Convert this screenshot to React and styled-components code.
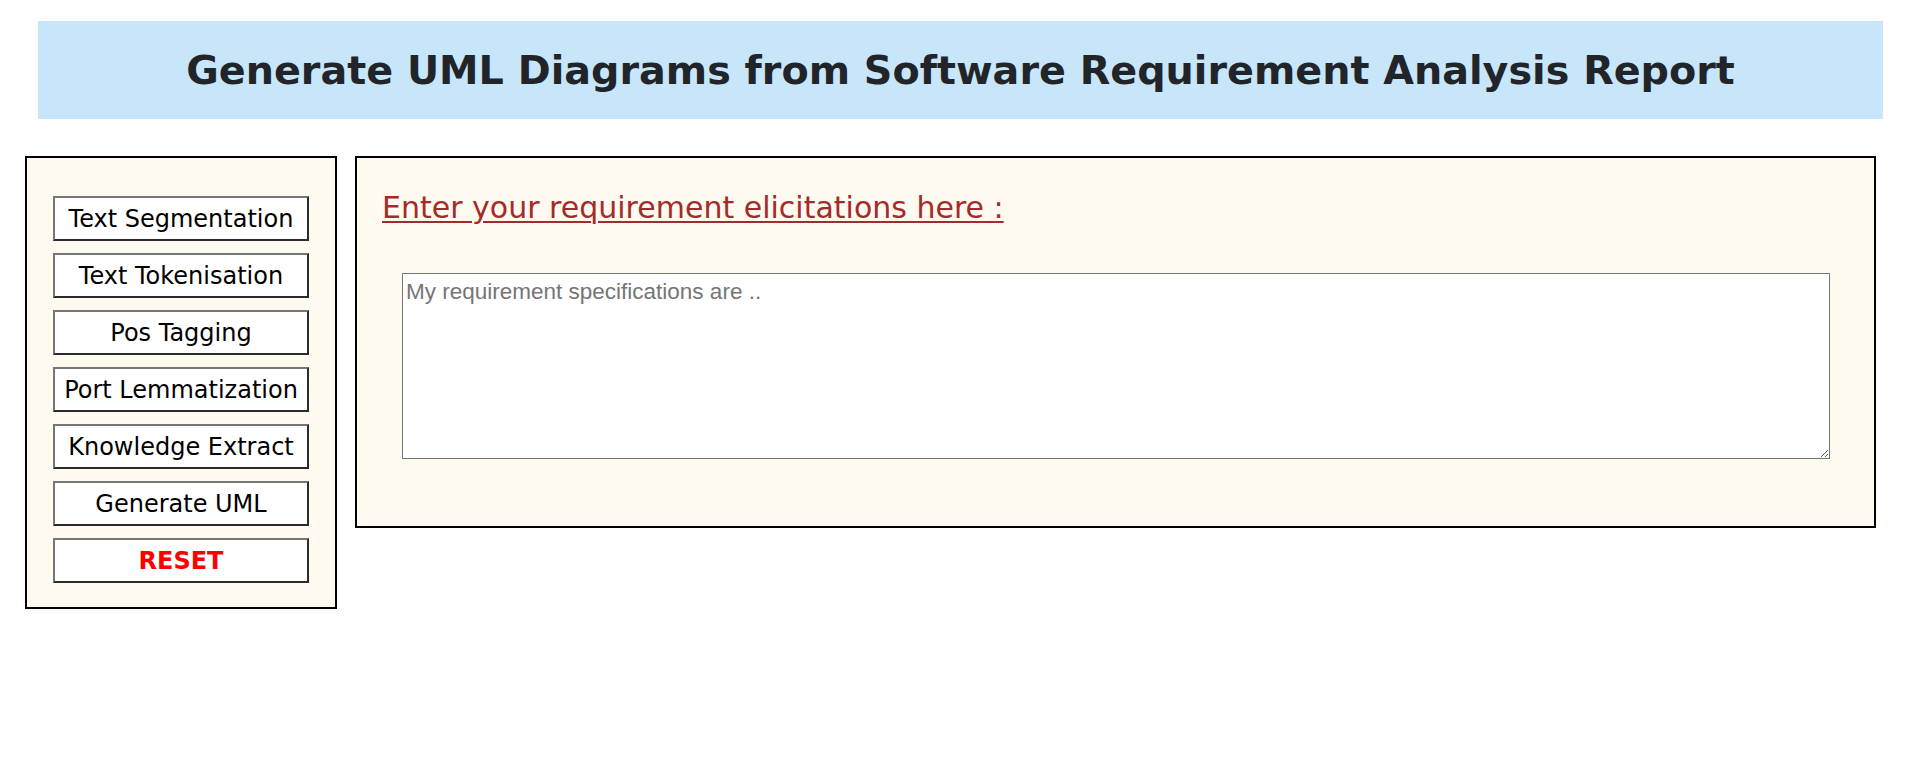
import React from "react"
import styled, { createGlobalStyle } from "styled-components"

const GlobalStyle = createGlobalStyle`
  html, body {
    margin: 0;
    padding: 0;
    background: #ffffff;
  }
  body {
    font-family: "DejaVu Sans", Verdana, sans-serif;
  }
`

const Page = styled.div`
  display: flex;
  flex-direction: column;
  padding: 21px 28px 0 25px;
`

const Header = styled.header`
  display: flex;
  align-items: center;
  justify-content: center;
  height: 98px;
  margin-left: 13px;
  background: #c8e6fa;
`

const Title = styled.h1`
  margin: 0;
  font-family: "DejaVu Sans", Verdana, sans-serif;
  font-size: 39.7px;
  font-weight: bold;
  color: #212529;
`

const Main = styled.div`
  display: flex;
  align-items: flex-start;
  gap: 18px;
  margin-top: 37px;
  margin-right: 7px;
`

const Sidebar = styled.nav`
  display: flex;
  flex-direction: column;
  gap: 12px;
  flex: 0 0 312px;
  box-sizing: border-box;
  padding: 38px 26px 24px;
  border: 2px solid #000;
  background: #fffaf0;
`

const StepButton = styled.button`
  height: 45px;
  box-sizing: border-box;
  padding: 1px 0 0;
  background: #fff;
  border: 2px solid;
  border-color: #767676 #2b2b2b #2b2b2b #767676;
  font-family: "DejaVu Sans", Verdana, sans-serif;
  font-size: 24px;
  font-weight: ${(p) => (p.$danger ? "bold" : "normal")};
  color: ${(p) => (p.$danger ? "#ff0000" : "#000")};
  cursor: pointer;
`

const Panel = styled.section`
  flex: 1;
  box-sizing: border-box;
  height: 372px;
  padding: 32px 45px 0 25px;
  border: 2px solid #000;
  background: #fffaf0;
`

const Heading = styled.h3`
  margin: 0;
  font-family: "DejaVu Sans", Verdana, sans-serif;
  font-size: 30px;
  font-weight: normal;
  color: #a52a2a;
  text-decoration: underline;
  text-decoration-thickness: 2px;
  text-underline-offset: 3px;
`

const Requirements = styled.textarea`
  display: block;
  box-sizing: border-box;
  width: calc(100% - 19px);
  height: 186px;
  margin: 48px 0 0 20px;
  padding: 5px 3px;
  border: 1px solid #767676;
  background: #fff;
  font-family: "Liberation Sans", Arial, sans-serif;
  font-size: 22.5px;
  color: #000;

  &::placeholder {
    color: #757575;
  }
`

const steps = [
  "Text Segmentation",
  "Text Tokenisation",
  "Pos Tagging",
  "Port Lemmatization",
  "Knowledge Extract",
  "Generate UML",
]

export default function App() {
  return (
    <>
      <GlobalStyle />
      <Page>
        <Header>
          <Title>Generate UML Diagrams from Software Requirement Analysis Report</Title>
        </Header>
        <Main>
          <Sidebar>
            {steps.map((s) => (
              <StepButton key={s}>{s}</StepButton>
            ))}
            <StepButton $danger>RESET</StepButton>
          </Sidebar>
          <Panel>
            <Heading>Enter your requirement elicitations here :</Heading>
            <Requirements placeholder="My requirement specifications are .." />
          </Panel>
        </Main>
      </Page>
    </>
  )
}
